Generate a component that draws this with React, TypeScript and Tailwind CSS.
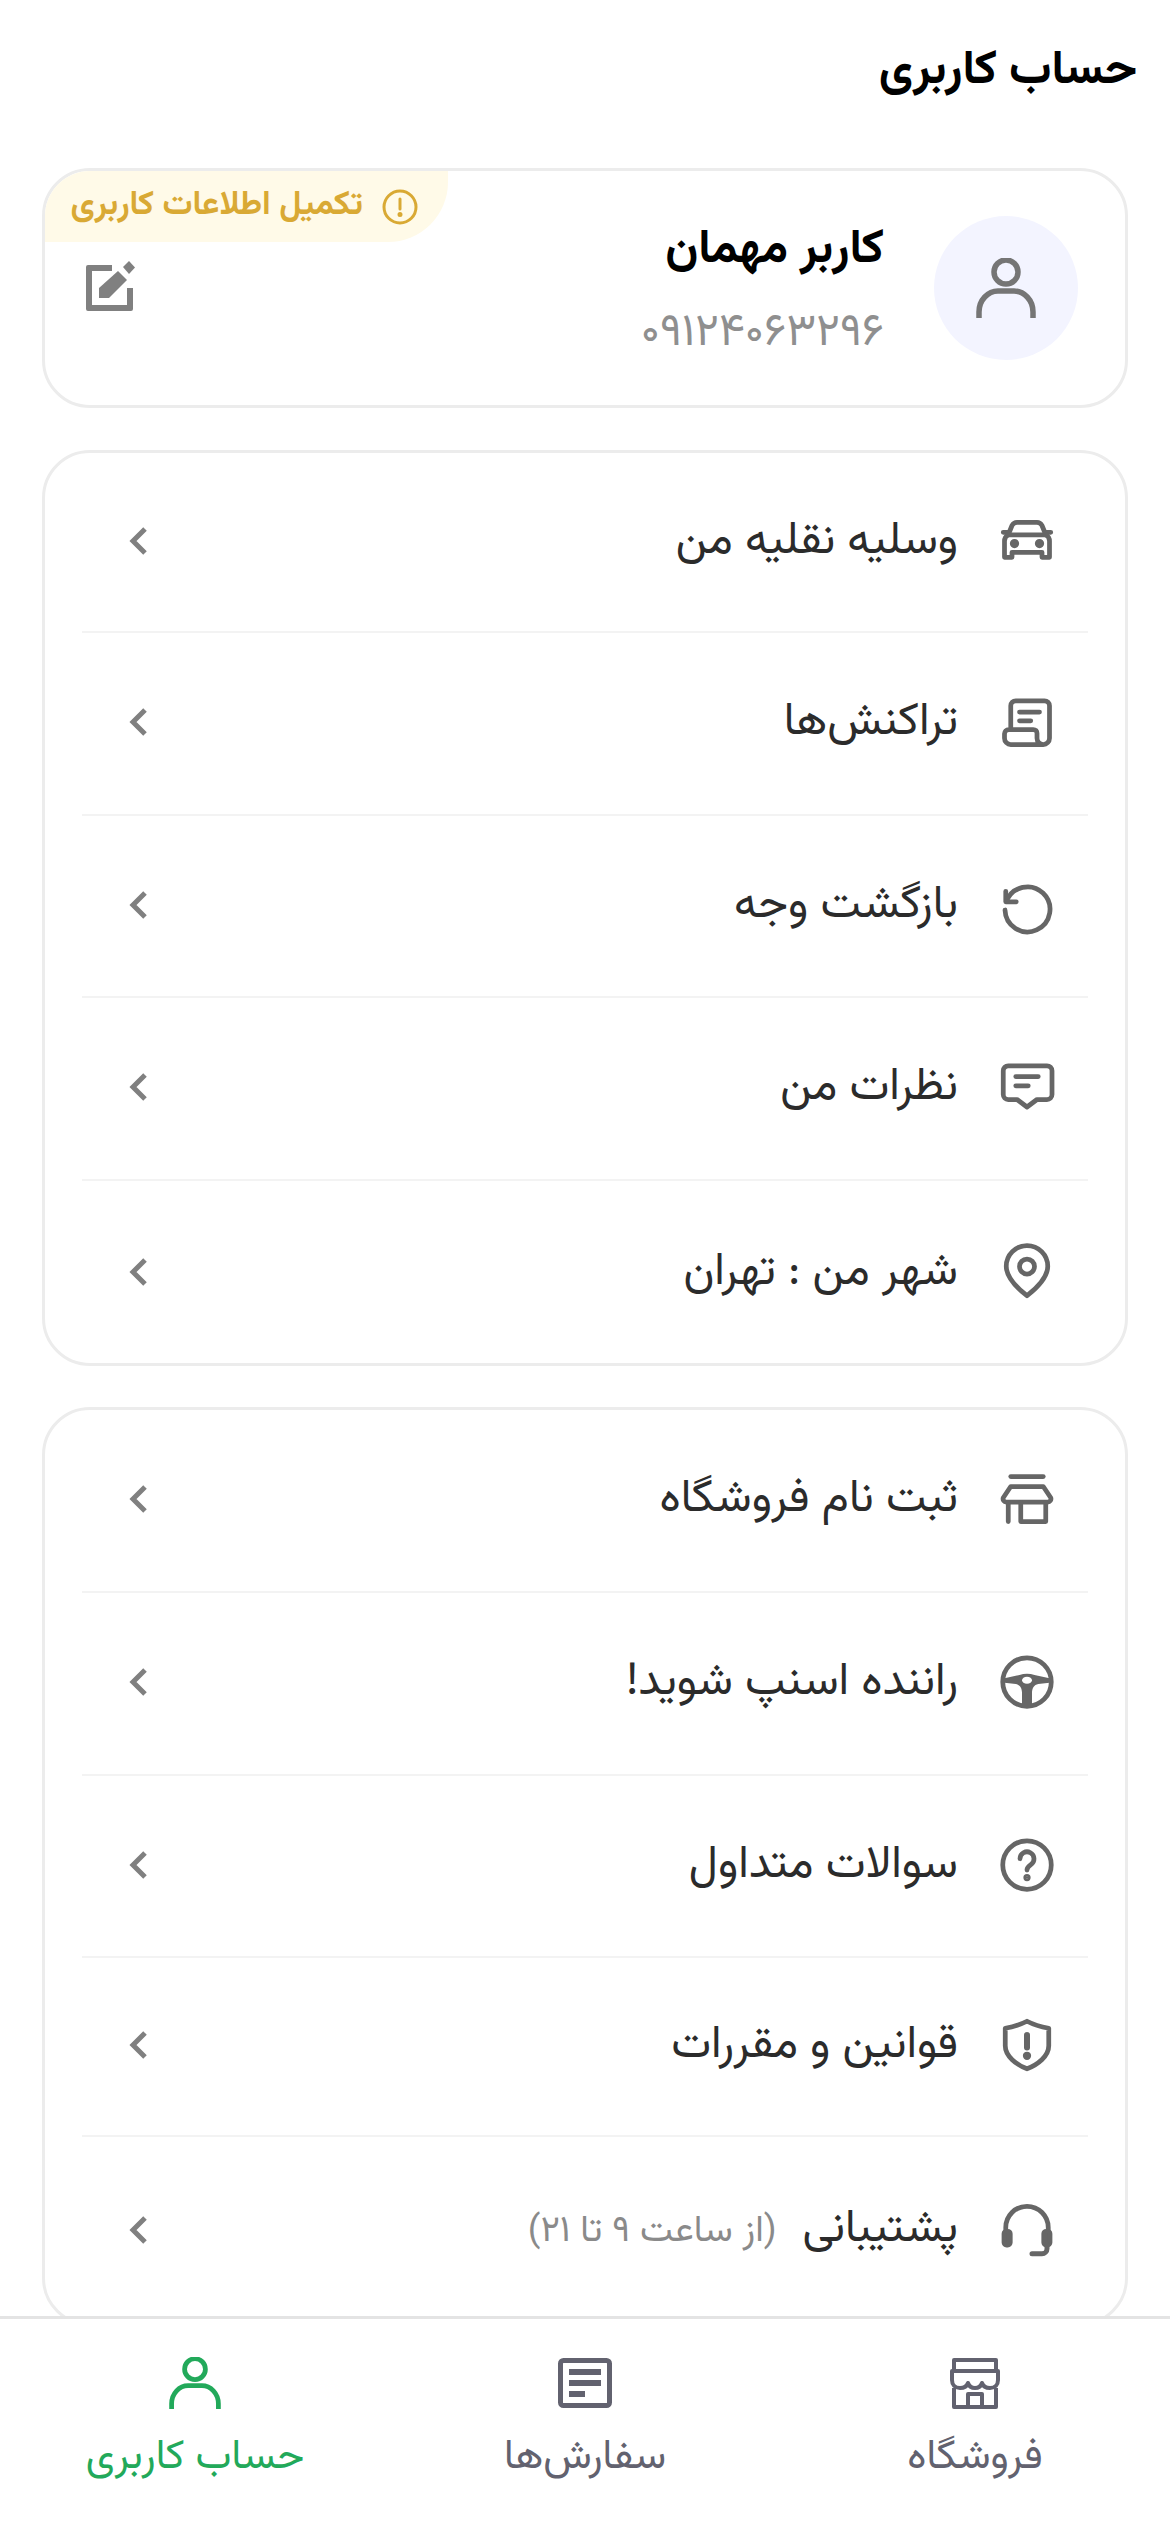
import React from "react";

const G = "#666666";

function Svg({ size, color = G, children }: { size: number; color?: string; children: React.ReactNode }) {
  return (
    <svg width={size} height={size} viewBox="0 0 24 24" fill="none" stroke={color} strokeWidth={1.9} strokeLinecap="round" strokeLinejoin="round">
      {children}
    </svg>
  );
}

const Car = () => (
  <Svg size={60}>
    <path d="M4.500 9.500 6 5.800C6.400 5 7 4.500 8 4.500h8c1 0 1.600.5 2 1.300l1.500 3.700" />
    <path d="M2.500 8.500h2M19.500 8.500h2" />
    <path d="M4.500 9.500h15c1 .6 1.500 1.500 1.500 2.500v6.500h-3v-2H6v2H3V12c0-1 .5-1.900 1.500-2.500Z" />
    <circle cx="7" cy="13" r=".9" fill={G} />
    <circle cx="17" cy="13" r=".9" fill={G} />
  </Svg>
);
const Receipt = () => (
  <Svg size={60}>
    <path d="M5.500 15V5.500a2 2 0 0 1 2-2H19a2 2 0 0 1 2 2v13a2.500 2.500 0 0 1-2.500 2.500H5.500A2.500 2.500 0 0 1 3 18.500v-1.800c0-.9.7-1.700 1.700-1.700h9.800c.9 0 1.500.6 1.500 1.500v2a2.500 2.500 0 0 0 2.500 2.500" />
    <path d="M9 8h8M9 11.500h4.500" />
  </Svg>
);
const Undo = () => (
  <Svg size={60}>
    <path d="M3.500 6.500v4.200h4.200" />
    <path d="M3.800 10.500A9 9 0 1 1 3.200 14" />
  </Svg>
);
const Chat = () => (
  <Svg size={60}>
    <path d="M4.500 3.500h15.500a2 2 0 0 1 2 2V15a2 2 0 0 1-2 2h-4l-4 3-4-3h-3.500a2 2 0 0 1-2-2V5.500a2 2 0 0 1 2-2Z" />
    <path d="M7.500 7.800h9M7.500 11.500h5" />
  </Svg>
);
const Pin = () => (
  <Svg size={60}>
    <path d="M12 21.500c-1.200-1-8.300-6.200-8.300-11.800a8.300 8.300 0 0 1 16.600 0c0 5.600-7.100 10.800-8.300 11.800Z" />
    <circle cx="12" cy="9.800" r="3" />
  </Svg>
);
const Store = () => (
  <Svg size={60}>
    <path d="M5.500 3h13" />
    <path d="M5.500 7h13L21.500 11.500c.3.900-.3 1.700-1.200 1.700H3.700c-.9 0-1.500-.8-1.200-1.700l3-4.500Z" />
    <path d="M4.500 13.500v7.500M19.500 13.500v7.500H9.500v-7.500" />
  </Svg>
);
const Wheel = () => (
  <svg width={60} height={60} viewBox="0 0 24 24" fill="none">
    <circle cx="12" cy="12" r="9.700" stroke={G} strokeWidth={1.9} />
    <path d="M3 10.500 9 9.200c1.900-.7 4.100-.7 6 0l6 1.300v1.800l-4.500.5c-1.700.3-2.500 1.800-2.500 3.500V21h-4v-4.700c0-1.700-.8-3.200-2.500-3.500L3 12.300Z" fill={G} />
    <ellipse cx="12" cy="11.300" rx="2" ry="1.400" fill="#fff" />
  </svg>
);
const Help = () => (
  <Svg size={60}>
    <circle cx="12" cy="12" r="9.700" />
    <path d="M9.200 9.500a2.800 2.800 0 1 1 4.300 2.400c-.9.600-1.500 1.100-1.500 2.100" />
    <circle cx="12" cy="17" r=".5" fill={G} />
  </Svg>
);
const Shield = () => (
  <Svg size={60}>
    <path d="M12 2.500c2.700 1.400 5.400 2.200 8.700 2.800v7c0 4.200-4.500 7.600-8.700 9.200-4.200-1.600-8.700-5-8.700-9.200v-7c3.300-.6 6-1.400 8.700-2.800Z" />
    <path d="M12 8v5" strokeWidth={2.400} />
    <circle cx="12" cy="16.300" r=".7" fill={G} />
  </Svg>
);
const Headset = () => (
  <Svg size={60}>
    <path d="M3.500 14V11a8.500 8.500 0 0 1 17 0v3" />
    <rect x="2.800" y="12.500" width="2.500" height="5.500" rx="1" fill={G} />
    <rect x="18.700" y="12.500" width="2.500" height="5.500" rx="1" fill={G} />
    <path d="M20 18v1.500a2 2 0 0 1-2 2h-4" strokeWidth={2} />
  </Svg>
);
const User = ({ size, color }: { size: number; color: string }) => (
  <svg width={size} height={size} viewBox="0 0 60 60" fill="none" stroke={color} strokeWidth={5.500}>
    <circle cx="30" cy="14" r="12" />
    <path d="M3 60v-6C3 42 12 33 22 33h16c10 0 19 9 19 21v6" />
  </svg>
);
const Chevron = () => (
  <svg width={24} height={32} viewBox="0 0 24 32" fill="none" stroke="#808080" strokeWidth={5} strokeLinejoin="miter">
    <path d="M19 4 7 16l12 12" />
  </svg>
);
const Edit = () => (
  <svg width={54} height={54} viewBox="0 0 54 54" fill="#808080">
    <path d="M27 6H3a2 2 0 0 0-2 2v42a2 2 0 0 0 2 2h43a2 2 0 0 0 2-2V29h-6v17H7V12h20Z" />
    <path d="M14 39V29L33 12l9 9-18 18Z" />
    <path d="M38 8 44 2l6 6.500L44 15Z" />
  </svg>
);
const Alert = () => (
  <svg width={36} height={36} viewBox="0 0 36 36" fill="none" stroke="#d9a934" strokeWidth={3}>
    <circle cx="18" cy="18" r="16" />
    <path d="M18 10v10" strokeLinecap="round" />
    <circle cx="18" cy="25.500" r="1" fill="#d9a934" />
  </svg>
);
const OrdersIcon = () => (
  <svg width={54} height={50} viewBox="0 0 54 50" fill="none">
    <rect x="2.500" y="2.500" width="49" height="45" rx="3" stroke="#62626f" strokeWidth={5} />
    <path d="M11 11h32v6H11ZM11 22h32v6H11ZM11 33h16v6H11Z" fill="#62626f" />
  </svg>
);
const ShopIcon = () => (
  <svg width={50} height={52} viewBox="0 0 50 52" fill="none" stroke="#62626f" strokeWidth={4} strokeLinejoin="round">
    <path d="M4 14V3h42v11" />
    <path d="M2 14h46v9c0 5-3 8-8 8-4 0-7-2-8-5-1 3-3 5-7 5s-6-2-7-5c-1 3-4 5-8 5-5 0-8-3-8-8Z" />
    <path d="M4 31v19h42V31" />
    <path d="M18 50V37h14v13" />
  </svg>
);

function Row({ icon, label, note, h, last }: { icon: React.ReactNode; label: string; note?: string; h: string; last?: boolean }) {
  return (
    <div className={`flex items-center mx-[37px] ${h} ${last ? "" : "pb-[3px] border-b-2 border-[#f3f3f3]"}`}>
      <div className="w-[60px] flex justify-center shrink-0 mr-[31px]">{icon}</div>
      <div className="flex-1 flex items-baseline mr-[39px] mt-[2px] gap-[26px] text-[#2b2b2b] text-[45.5px] leading-[60px]">
        <span>{label}</span>
        {note && <span className="text-[37px] text-[#8a8a8a]">{note}</span>}
      </div>
      <div className="ml-[44px]"><Chevron /></div>
    </div>
  );
}

function NavItem({ icon, label, color }: { icon: React.ReactNode; label: string; color: string }) {
  return (
    <div className="flex-1 flex flex-col items-center pt-[32px] gap-[16px]">
      <div className="h-[64px] flex items-center">{icon}</div>
      <span className="text-[41px] leading-[54px]" style={{ color }}>{label}</span>
    </div>
  );
}

export default function App() {
  return (
    <div dir="rtl" className="w-[1170px] h-[2532px] flex flex-col bg-white overflow-hidden font-['Vazirmatn','DejaVu_Sans',sans-serif]">
      <main className="flex-1 min-h-0 overflow-hidden">
        <h1 className="h-[168px] pt-[42px] pr-[33px] text-[47.500px] leading-[60px] font-bold text-black">حساب کاربری</h1>
        <section className="relative h-[240px] mx-[42px] rounded-[48px] border-[3px] border-[#ececec] flex items-center pr-[47px]">
          <div className="w-[144px] h-[144px] rounded-full bg-[#f3f4ff] flex items-center justify-center">
            <User size={60} color="#757575" />
          </div>
          <div className="mr-[50px] mt-[8px] flex flex-col gap-[23px]">
            <div className="text-[47.500px] leading-[60px] font-bold text-black">کاربر مهمان</div>
            <div className="text-[45.500px] leading-[60px] text-[#8f8f8f]">۰۹۱۲۴۰۶۳۲۹۶</div>
          </div>
          <div className="absolute top-0 left-0 w-[403px] h-[71px] bg-[#fffae8] rounded-tl-[45px] rounded-br-[60px] flex items-center gap-[19px] pr-[30px] text-[33.500px] font-bold text-[#d9a934]">
            <Alert />
            <span>تکمیل اطلاعات کاربری</span>
          </div>
          <div className="absolute left-[40px] top-[88px]"><Edit /></div>
        </section>
        <section className="mt-[42px] mx-[42px] rounded-[48px] border-[3px] border-[#ececec]">
          <Row h="h-[180px]" icon={<Car />} label="وسلیه نقلیه من" />
          <Row h="h-[183px]" icon={<Receipt />} label="تراکنش‌ها" />
          <Row h="h-[182px]" icon={<Undo />} label="بازگشت وجه" />
          <Row h="h-[183px]" icon={<Chat />} label="نظرات من" />
          <Row h="h-[182px]" icon={<Pin />} label="شهر من : تهران" last />
        </section>
        <section className="mt-[41px] mx-[42px] rounded-[48px] border-[3px] border-[#ececec]">
          <Row h="h-[183px]" icon={<Store />} label="ثبت نام فروشگاه" />
          <Row h="h-[183px]" icon={<Wheel />} label="راننده اسنپ شوید!" />
          <Row h="h-[182px]" icon={<Help />} label="سوالات متداول" />
          <Row h="h-[179px]" icon={<Shield />} label="قوانین و مقررات" />
          <Row h="h-[186px]" icon={<Headset />} label="پشتیبانی" note="(از ساعت ۹ تا ۲۱)" last />
        </section>
      </main>
      <nav className="h-[216px] shrink-0 border-t-[3px] border-[#e4e4e4] bg-white flex">
        <NavItem icon={<ShopIcon />} label="فروشگاه" color="#62626f" />
        <NavItem icon={<OrdersIcon />} label="سفارش‌ها" color="#62626f" />
        <NavItem icon={<User size={52} color="#22a95a" />} label="حساب کاربری" color="#22a95a" />
      </nav>
    </div>
  );
}
